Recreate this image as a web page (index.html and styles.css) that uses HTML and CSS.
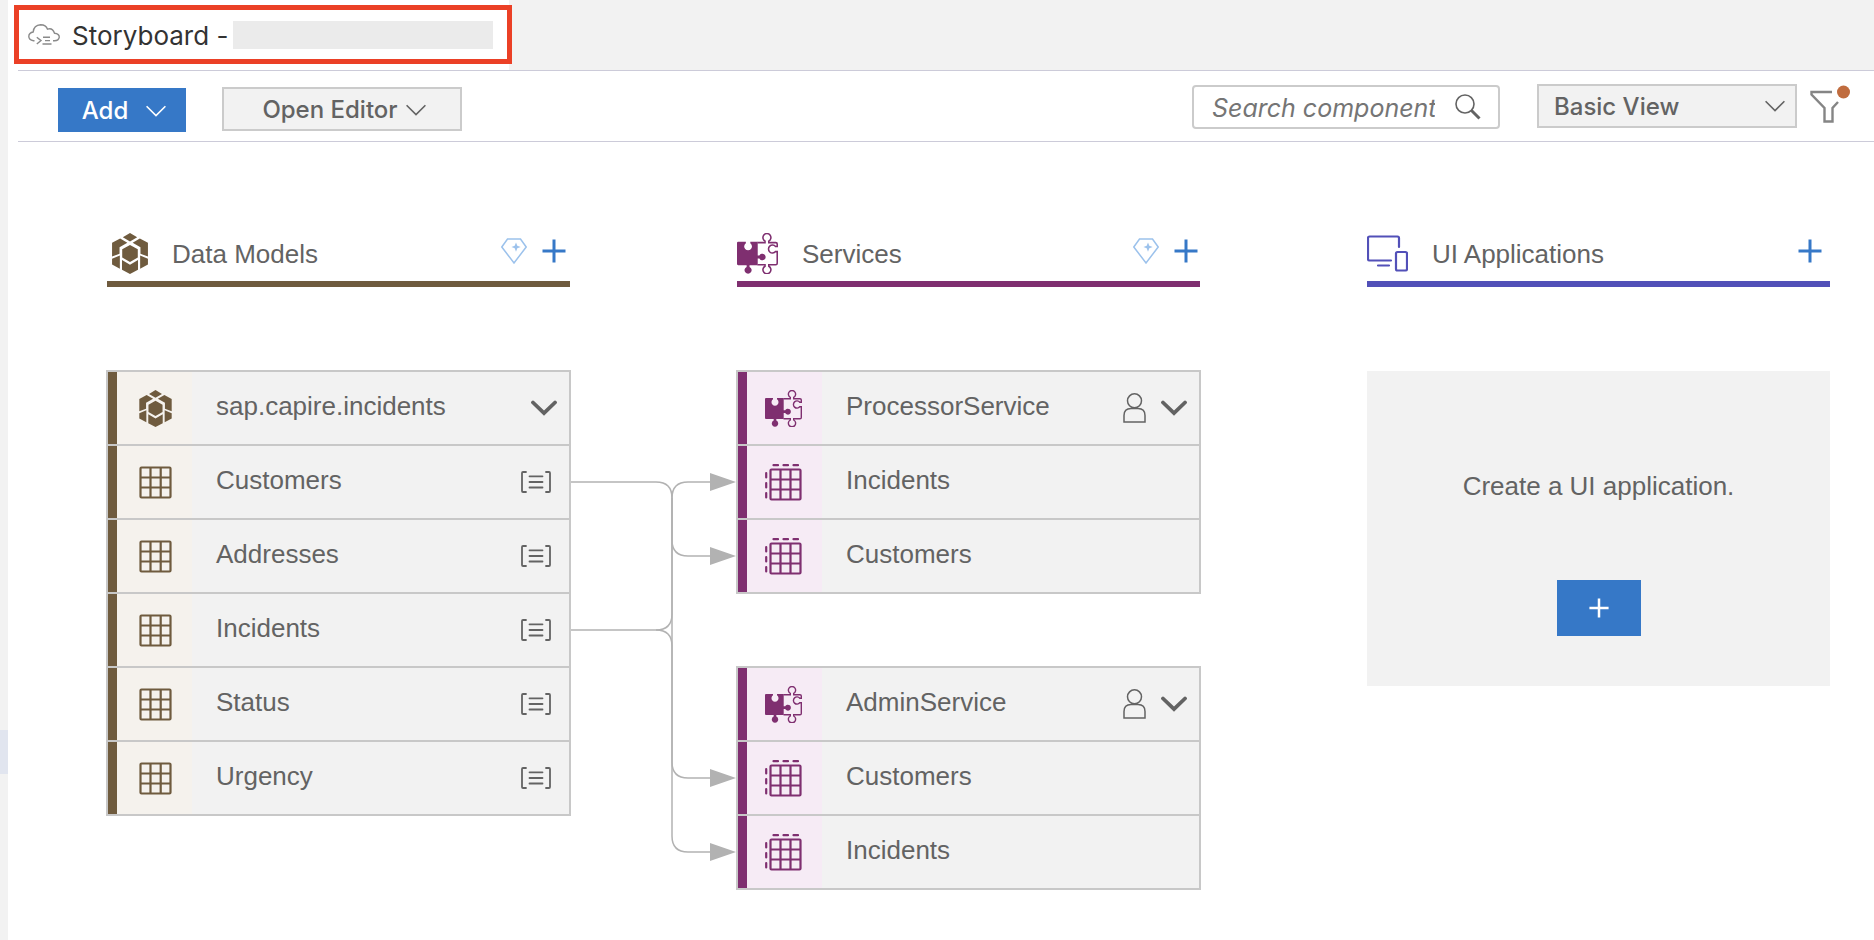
FILE: index.html
```html
<!DOCTYPE html>
<html lang="en">
<head>
<meta charset="utf-8">
<title>Storyboard</title>
<link rel="stylesheet" href="styles.css">
</head>
<body>
<svg class="sprite" aria-hidden="true">
  <symbol id="cube" viewBox="0 0 35 40">
    <path fill="currentColor" d="M17.5 0l7 4.2-7 4.2-7-4.2zM17.5 11.6l7.6 4.3v8l-7.6 4.3-7.6-4.3v-8zM0 9.600l7.900-4.300 7 4.100-7.600 4.400v6.400L0 23zM35 9.600l-7.900-4.300-7 4.100 7.600 4.400v6.400L35 23zM0 25.200l7.600-3.200v12.800L0 30.700zM35 25.200l-7.600-3.200v12.800l7.600-4.100zM9.700 26.300l7.800 4.600 7.800-4.600v9.600L17.500 40l-7.800-4.100z"/>
  </symbol>
  <symbol id="puzzle" viewBox="0 0 37 37">
    <path fill="currentColor" d="M1 8H8V9.3A3.5 3.5 0 1 0 12 9.3V8H18.7V20.3H20.2A3 3 0 1 1 20.2 23H18.7V29H11.3V30.6A3.2 3.2 0 1 1 8.7 30.6V29H1Q0 29 0 28V9Q0 8 1 8Z"/>
    <path fill="none" stroke="currentColor" stroke-width="1.4" d="M18.5 8.7H25.3V7.3A3.6 3.6 0 1 1 28.7 7.3V8.7H35Q36.3 8.7 36.3 10V12.2H34.8A3.6 3.6 0 1 0 34.8 16.8H36.3V27.4Q36.3 28.7 35 28.7H28.7V30A3.6 3.6 0 1 1 25.3 30V28.7H18.5"/>
  </symbol>
  <symbol id="table" viewBox="0 0 37 37">
    <path fill="none" stroke="currentColor" stroke-width="2.2" d="M6.500 3.500h28q1 0 1 1v28q0 1-1 1h-28q-1 0-1-1v-28q0-1 1-1zM15.500 3.500v30M25.700 3.500v30M5.500 13.500h30M5.500 23.500h30"/>
  </symbol>
  <symbol id="projection" viewBox="0 0 37 37">
    <path fill="none" stroke="currentColor" stroke-width="2.2" d="M6.500 5.500h28q1 0 1 1v28q0 1-1 1h-28q-1 0-1-1v-28q0-1 1-1zM15.500 5.500v30M25.500 5.500v30M5.500 15.500h30M5.500 25.500h30"/>
    <path fill="none" stroke="currentColor" stroke-width="2.2" stroke-linecap="round" d="M8.500 1.200h4.500M18.500 1.200h4.500M28.500 1.200h4.500M1.200 9v4.500M1.200 19v4.500M1.200 29v4.500"/>
  </symbol>
  <symbol id="fields" viewBox="0 0 30 22">
    <path fill="none" stroke="currentColor" stroke-width="1.800" stroke-linecap="round" stroke-linejoin="round" d="M5 1H2q-1 0-1 1v18q0 1 1 1h3M25 1h3q1 0 1 1v18q0 1-1 1h-3M8.500 5.300h13M8.500 11h13M8.500 16.500h13"/>
  </symbol>
  <symbol id="expand" viewBox="0 0 26 16">
    <path fill="none" stroke="currentColor" stroke-width="3.800" stroke-linecap="round" d="M2 2.500l11 10.500 11-10.500"/>
  </symbol>
  <symbol id="person" viewBox="0 0 23 30">
    <path fill="none" stroke="currentColor" stroke-width="1.500" d="M1 29V22.500Q1 15.500 8 15.500H15Q22 15.500 22 22.500V29Z"/>
    <circle cx="11.500" cy="7.800" r="7" fill="none" stroke="currentColor" stroke-width="1.500"/>
  </symbol>
  <symbol id="gem" viewBox="0 0 26 26">
    <path fill="none" stroke="currentColor" stroke-width="1.500" d="M6.500 1h13l5.700 8L13 25 .8 9z"/>
    <path fill="currentColor" d="M15 4.500l1.300 3.200 3.400 1.300-3.400 1.300-1.300 3.400-1.300-3.400L10.500 9l3.200-1.300z"/>
  </symbol>
  <symbol id="plus" viewBox="0 0 24 24">
    <path fill="none" stroke="currentColor" stroke-width="3" d="M12 .5v23M.5 12h23"/>
  </symbol>
  <symbol id="chevron" viewBox="0 0 20 12">
    <path fill="none" stroke="currentColor" stroke-width="1.600" d="M.6 1.200l9.400 9.400 9.400-9.400"/>
  </symbol>
</svg>

<div class="shell">
  <aside class="rail"><span class="rail-mark"></span></aside>
  <div class="main">
    <header class="tabs">
      <div class="tab">
        <svg class="cloud" viewBox="0 0 32 22" fill="none" stroke="currentColor" stroke-width="1.400" aria-hidden="true">
          <path d="M6.500 16.800H5.500Q.8 16.200.8 12.300 1 8.700 5.200 8 5.800 1.200 12.600.8 18 .8 19.500 5.200 24.500 3.500 26.500 9.200 31.300 9.600 31.300 13.200 30.700 16.800 26.500 16.800H25"/>
          <path d="M8.800 13.300l4.200 3.300-4.200 3.400M15 13.200h7M17 16.600h5M14.500 20h9"/>
        </svg>
        <h1 class="tab-title">Storyboard -</h1>
        <span class="tab-name"></span>
      </div>
    </header>
    <div class="toolbar">
      <button class="btn btn-add" type="button">Add <svg class="chev" aria-hidden="true"><use href="#chevron"/></svg></button>
      <button class="btn btn-editor" type="button">Open Editor <svg class="chev" aria-hidden="true"><use href="#chevron"/></svg></button>
      <div class="search">
        <input class="search-input" type="text" placeholder="Search components" aria-label="Search components">
        <svg class="search-icon" viewBox="0 0 26 26" fill="none" stroke="currentColor" aria-hidden="true"><circle cx="10" cy="10" r="9" stroke-width="1.600"/><path stroke-width="3" d="M16.500 16.500l8 8"/></svg>
      </div>
      <div class="view">
        <select class="view-select" aria-label="View"><option>Basic View</option></select>
        <svg class="chev view-chev" aria-hidden="true"><use href="#chevron"/></svg>
      </div>
      <button class="filter" type="button" aria-label="Filter">
        <svg viewBox="0 0 40 40" aria-hidden="true"><path fill="none" stroke="#858585" stroke-width="2.400" d="M22 8H1.500V10.500L14.500 24V37.500H22.500V24L28 18"/><circle cx="33.500" cy="8" r="6.500" fill="#c06c3e"/></svg>
      </button>
    </div>

    <main class="board">
      <div class="head head-data">
        <svg class="head-icon" aria-hidden="true"><use href="#cube"/></svg>
        <h2 class="head-title">Data Models</h2>
        <button class="act act-gem" type="button" aria-label="Generate data model"><svg aria-hidden="true"><use href="#gem"/></svg></button>
        <button class="act" type="button" aria-label="Add data model"><svg aria-hidden="true"><use href="#plus"/></svg></button>
      </div>
      <div class="head head-services">
        <svg class="head-icon" aria-hidden="true"><use href="#puzzle"/></svg>
        <h2 class="head-title">Services</h2>
        <button class="act act-gem" type="button" aria-label="Generate service"><svg aria-hidden="true"><use href="#gem"/></svg></button>
        <button class="act" type="button" aria-label="Add service"><svg aria-hidden="true"><use href="#plus"/></svg></button>
      </div>
      <div class="head head-ui">
        <svg class="head-icon" viewBox="0 0 41 41" fill="none" stroke="currentColor" stroke-width="2.200" stroke-linecap="round" aria-hidden="true"><path d="M24 27.500H2.500Q1 27.500 1 26V5Q1 3.500 2.500 3.500H30.500Q32 3.500 32 5V14M11 32.500H22"/><rect x="29" y="19" width="11" height="18.500" rx="1.500"/></svg>
        <h2 class="head-title">UI Applications</h2>
        <button class="act" type="button" aria-label="Add UI application"><svg aria-hidden="true"><use href="#plus"/></svg></button>
      </div>

      <section class="stack stack-data">
        <ul class="card card-data">
          <li class="row"><span class="tile"><svg aria-hidden="true"><use href="#cube" x="2"/></svg></span><span class="label">sap.capire.incidents</span><button class="expand" type="button" aria-label="Collapse"><svg aria-hidden="true"><use href="#expand"/></svg></button></li>
          <li class="row"><span class="tile"><svg aria-hidden="true"><use href="#table"/></svg></span><span class="label">Customers</span><svg class="fields" aria-hidden="true"><use href="#fields"/></svg></li>
          <li class="row"><span class="tile"><svg aria-hidden="true"><use href="#table"/></svg></span><span class="label">Addresses</span><svg class="fields" aria-hidden="true"><use href="#fields"/></svg></li>
          <li class="row"><span class="tile"><svg aria-hidden="true"><use href="#table"/></svg></span><span class="label">Incidents</span><svg class="fields" aria-hidden="true"><use href="#fields"/></svg></li>
          <li class="row"><span class="tile"><svg aria-hidden="true"><use href="#table"/></svg></span><span class="label">Status</span><svg class="fields" aria-hidden="true"><use href="#fields"/></svg></li>
          <li class="row"><span class="tile"><svg aria-hidden="true"><use href="#table"/></svg></span><span class="label">Urgency</span><svg class="fields" aria-hidden="true"><use href="#fields"/></svg></li>
        </ul>
      </section>

      <svg class="links" viewBox="0 0 167 520" aria-hidden="true">
        <g fill="none" stroke="#b2b2b2" stroke-width="1.500">
          <path d="M1 112H86Q102 112 102 128V170Q102 186 118 186H142"/>
          <path d="M102 128V392Q102 408 118 408H142"/>
          <path d="M1 260H86Q102 260 102 244V128Q102 112 118 112H142"/>
          <path d="M86 260Q102 260 102 276V466Q102 482 118 482H142"/>
        </g>
        <path fill="#b2b2b2" d="M140 103l26 9-26 9zM140 177l26 9-26 9zM140 399l26 9-26 9zM140 473l26 9-26 9z"/>
      </svg>

      <section class="stack stack-services">
        <ul class="card card-service">
          <li class="row"><span class="tile"><svg aria-hidden="true"><use href="#puzzle"/></svg></span><span class="label">ProcessorService</span><svg class="person" aria-hidden="true"><use href="#person"/></svg><button class="expand" type="button" aria-label="Collapse"><svg aria-hidden="true"><use href="#expand"/></svg></button></li>
          <li class="row"><span class="tile"><svg aria-hidden="true"><use href="#projection"/></svg></span><span class="label">Incidents</span></li>
          <li class="row"><span class="tile"><svg aria-hidden="true"><use href="#projection"/></svg></span><span class="label">Customers</span></li>
        </ul>
        <ul class="card card-service">
          <li class="row"><span class="tile"><svg aria-hidden="true"><use href="#puzzle"/></svg></span><span class="label">AdminService</span><svg class="person" aria-hidden="true"><use href="#person"/></svg><button class="expand" type="button" aria-label="Collapse"><svg aria-hidden="true"><use href="#expand"/></svg></button></li>
          <li class="row"><span class="tile"><svg aria-hidden="true"><use href="#projection"/></svg></span><span class="label">Customers</span></li>
          <li class="row"><span class="tile"><svg aria-hidden="true"><use href="#projection"/></svg></span><span class="label">Incidents</span></li>
        </ul>
      </section>

      <section class="empty">
        <p class="empty-text">Create a UI application.</p>
        <button class="empty-add" type="button" aria-label="Create a UI application"><svg aria-hidden="true"><use href="#plus"/></svg></button>
      </section>
    </main>
  </div>
</div>
</body>
</html>
```
FILE: styles.css
```css
*,
*::before,
*::after {
  box-sizing: border-box;
}

body {
  margin: 0;
  background: #fff;
  color: #636363;
  font: 26px/32px "Liberation Sans", Arial, sans-serif;
}

button,
input,
select {
  margin: 0;
  padding: 0;
  border: 0;
  border-radius: 0;
  background: none;
  color: inherit;
  font: 500 24px/32px Inter, "Noto Sans", sans-serif;
}

h1,
h2,
p,
ul {
  margin: 0;
  padding: 0;
  font-weight: 400;
  list-style: none;
}

svg {
  display: block;
  flex: none;
}

.sprite {
  position: absolute;
  width: 0;
  height: 0;
}

.shell {
  display: flex;
  min-height: 100vh;
}

.rail {
  flex: none;
  width: 8px;
  padding-top: 730px;
  background: #f2f2f2;
}

.rail-mark {
  display: block;
  height: 44px;
  background: #e1e5ef;
}

.main {
  flex: 1;
  min-width: 0;
}

/* Tab strip */
.tabs {
  display: flex;
  height: 70px;
  padding-left: 6px;
  background: linear-gradient(90deg, #fff 501px, #f2f2f2 501px);
}

.tab {
  display: flex;
  align-items: center;
  width: 498px;
  height: 59px;
  margin-top: 5px;
  padding-left: 9px;
  border: 5px solid #eb4026;
}

.cloud {
  width: 32px;
  height: 22px;
  color: #8a8a8a;
}

.tab-title {
  padding-top: 2px;
  margin-left: 12px;
  color: #333;
  font: 26px/32px Inter, "Noto Sans", sans-serif;
}

.tab-name {
  flex: 1;
  height: 28px;
  margin: 0 14px 0 5px;
  background: #ebebeb;
}

/* Toolbar */
.toolbar {
  display: flex;
  align-items: center;
  height: 72px;
  margin-left: 10px;
  padding: 0 24px 0 40px;
  border-top: 1px solid #cccbd9;
  border-bottom: 1px solid #cccbd9;
}

.btn {
  display: flex;
  flex: none;
  align-items: center;
  justify-content: center;
  height: 44px;
  padding-top: 2px;
}

.chev {
  width: 20px;
  height: 12px;
}

.btn-add {
  gap: 18px;
  width: 128px;
  margin-top: 8px;
  padding-left: 4px;
  background: #3678c7;
  color: #fff;
}

.btn-editor {
  gap: 8px;
  width: 240px;
  margin: 6px 0 0 36px;
  padding-left: 4px;
  border: 2px solid #cbcbcb;
  background: #f2f2f2;
}

.search {
  display: flex;
  align-items: center;
  width: 308px;
  height: 44px;
  margin: 2px 0 0 auto;
  padding: 0 17px 0 18px;
  border: 2px solid #cbcbcb;
  border-radius: 4px;
}

.search-input {
  flex: 1;
  min-width: 0;
  padding-top: 2px;
  margin-right: 20px;
  outline: 0;
  font-size: 25px;
  font-style: italic;
  font-weight: 400;
}

.search-input::placeholder {
  color: #757575;
}

.search-icon {
  width: 26px;
  height: 26px;
}

.view {
  display: grid;
  align-items: center;
  width: 260px;
  height: 44px;
  margin-left: 37px;
  border: 2px solid #cbcbcb;
  background: #f2f2f2;
}

.view-select {
  grid-area: 1 / 1;
  width: 100%;
  height: 40px;
  padding: 2px 0 0 15px;
  appearance: none;
}

.view-chev {
  grid-area: 1 / 1;
  justify-self: end;
  margin-right: 10px;
  pointer-events: none;
}

.filter {
  width: 40px;
  margin-left: 13px;
  padding-bottom: 4px;
}

.filter svg {
  width: 40px;
  height: 40px;
}

/* Board */
.board {
  display: grid;
  grid-template-columns: 1fr 167px 1fr 167px 1fr;
  grid-template-rows: auto auto;
  row-gap: 83px;
  align-items: start;
  padding: 86px 44px 40px 99px;
}

.head {
  display: flex;
  align-items: center;
  height: 59px;
  padding: 0 4px 3px 0;
  border-bottom: 6px solid;
}

.head-data {
  grid-area: 1 / 1;
  border-color: #6f5b3e;
}

.head-services {
  grid-area: 1 / 3;
  padding-right: 2px;
  border-color: #7f2f70;
}

.head-ui {
  grid-area: 1 / 5;
  padding-right: 8px;
  border-color: #5250b8;
}

.head-icon {
  width: 41px;
  height: 41px;
}

.head-data .head-icon {
  width: 46px;
  margin-right: -5px;
  color: #6f5b3e;
}

.head-services .head-icon {
  color: #7f2f70;
}

.head-ui .head-icon {
  color: #5250b8;
}

.head-title {
  flex: 1;
  padding: 2px 0 0 24px;
  font-size: 26px;
}

.act {
  margin-left: 15px;
  padding-bottom: 4px;
  color: #3678c7;
}

.act svg {
  width: 24px;
  height: 24px;
}

.act-gem {
  color: #9cc2ec;
}

.act-gem svg {
  width: 26px;
  height: 26px;
}

.stack {
  display: grid;
  gap: 72px;
  margin: 0 -1px;
}

.stack-data {
  grid-area: 2 / 1;
}

.stack-services {
  grid-area: 2 / 3;
}

.links {
  grid-area: 2 / 2;
  width: 167px;
  height: 520px;
}

.card {
  border: 2px solid #c8c8c8;
  background: #f2f2f2;
}

.card-data {
  --accent: #6f5b3e;
  --tint: #f5f2ed;
}

.card-service {
  --accent: #7f2f70;
  --tint: #f6ebf5;
}

.row {
  display: flex;
  align-items: center;
  height: 74px;
  padding-right: 18px;
  border-bottom: 2px solid #c8c8c8;
}

.row:last-child {
  height: 72px;
  border-bottom: 0;
}

.tile {
  display: flex;
  flex: none;
  align-items: center;
  align-self: stretch;
  width: 84px;
  padding-left: 18px;
  border-left: 9px solid var(--accent);
  background: var(--tint);
  color: var(--accent);
}

.tile svg {
  width: 37px;
  height: 37px;
}

.label {
  flex: 1;
  padding: 0 0 4px 24px;
}

.fields {
  width: 30px;
  height: 22px;
}

.person {
  width: 23px;
  height: 30px;
  margin-right: 15px;
}

.expand {
  margin-right: -6px;
}

.expand svg {
  width: 26px;
  height: 16px;
}

.empty {
  display: flex;
  grid-area: 2 / 5;
  flex-direction: column;
  align-items: center;
  margin-top: 1px;
  padding: 99px 24px 50px;
  background: #f2f2f2;
}

.empty-add {
  display: flex;
  align-items: center;
  justify-content: center;
  width: 84px;
  height: 56px;
  margin-top: 78px;
  background: #3678c7;
  color: #fff;
}

.empty-add svg {
  width: 20px;
  height: 20px;
}
```
